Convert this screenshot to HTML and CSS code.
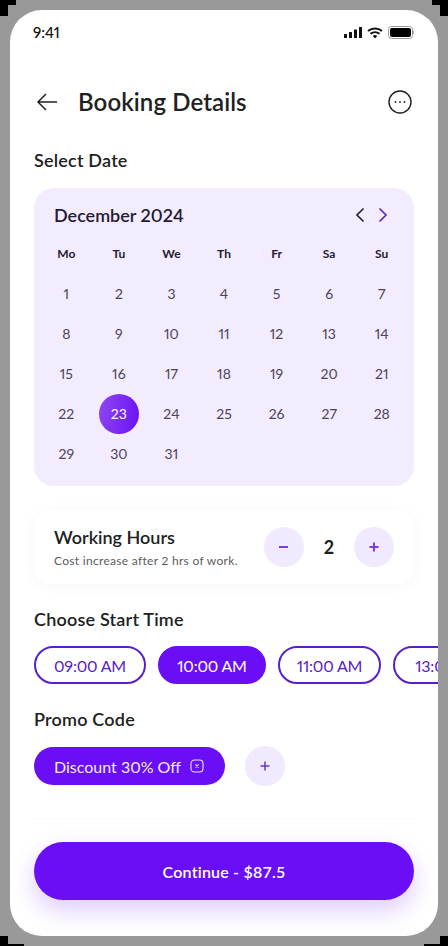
FILE: index.html
```html
<!DOCTYPE html>
<html lang="en">

<head>
  <meta charset="UTF-8" />
  <meta name="viewport" content="width=device-width, initial-scale=1.0" />
  <title>Booking Details</title>
  <link rel="stylesheet" href="styles.css">
</head>

<body>
  <!-- Black notches left in the corners of the mockup -->
  <svg class="corners" width="448" height="946" viewBox="0 0 448 946">
    <path fill="#000" d="M0 0h16v5H8v11H0zM448 0h-16v5h8v11h8zM0 946v-10h8v8h16v2zM448 946v-10h-8v8h-16v2z" />
  </svg>

  <div class="screen">
    <div class="status-bar">
      <span class="status-time">9:41</span>
      <svg class="status-icons" width="70" height="14" viewBox="0 0 70 14">
        <g fill="#111">
          <rect x="0" y="8" width="3" height="4" rx=".5" />
          <rect x="5" y="6" width="3" height="6" rx=".5" />
          <rect x="10" y="3.500" width="3" height="8.500" rx=".5" />
          <rect x="15" y="1" width="3" height="11" rx=".5" />
        </g>
        <path d="M24 5a11 11 0 0 1 14 0M26.500 7.800a7 7 0 0 1 9 0" fill="none" stroke="#111" stroke-width="2" />
        <path d="M28.800 10a3.500 3.500 0 0 1 4.400 0L31 12.500z" fill="#111" />
        <rect x="44.500" y=".5" width="24" height="12" rx="3" fill="none" stroke="#999" />
        <rect x="46" y="2" width="21" height="9" rx="2" fill="#000" />
        <rect x="69" y="5" width="1" height="3" fill="#aaa" />
      </svg>
    </div>

    <header class="page-header">
      <svg class="back-icon" width="24" height="24" viewBox="0 0 24 24">
        <path d="M23 12H4M12 4l-8 8 8 8" fill="none" stroke="#212121" stroke-width="1.500" />
      </svg>
      <h1>Booking Details</h1>
      <svg class="more-icon" width="24" height="24" viewBox="0 0 24 24">
        <circle cx="12" cy="12" r="11" fill="none" stroke="#212121" stroke-width="1.400" />
        <g fill="#212121">
          <circle cx="7.500" cy="12" r=".9" />
          <circle cx="12" cy="12" r=".9" />
          <circle cx="16.500" cy="12" r=".9" />
        </g>
      </svg>
    </header>

    <h2 class="section-title date-title">Select Date</h2>
    <section class="calendar">
      <div class="calendar-head">
        <span class="month">December 2024</span>
        <div class="month-nav">
          <svg width="12" height="16" viewBox="0 0 12 16">
            <path d="M9.500 1.500L3 8l6.500 6.500" fill="none" stroke="#2a2140" stroke-width="1.700" />
          </svg>
          <svg width="12" height="16" viewBox="0 0 12 16">
            <path d="M2.500 1.500L9 8l-6.500 6.500" fill="none" stroke="#5a28c8" stroke-width="1.700" />
          </svg>
        </div>
      </div>
      <div class="weekdays">
        <span>Mo</span><span>Tu</span><span>We</span><span>Th</span><span>Fr</span><span>Sa</span><span>Su</span>
      </div>
      <div class="days">
        <span>1</span><span>2</span><span>3</span><span>4</span><span>5</span><span>6</span><span>7</span>
        <span>8</span><span>9</span><span>10</span><span>11</span><span>12</span><span>13</span><span>14</span>
        <span>15</span><span>16</span><span>17</span><span>18</span><span>19</span><span>20</span><span>21</span>
        <span>22</span><span class="selected">23</span><span>24</span><span>25</span><span>26</span><span>27</span><span>28</span>
        <span>29</span><span>30</span><span>31</span>
      </div>
    </section>

    <section class="hours-card">
      <div class="hours-text">
        <div class="hours-title">Working Hours</div>
        <div class="hours-note">Cost increase after 2 hrs of work.</div>
      </div>
      <div class="stepper">
        <span class="round-btn">
          <svg width="12" height="12" viewBox="0 0 12 12"><path d="M1 6h9" stroke="#7b3fe0" stroke-width="2" /></svg>
        </span>
        <span class="count">2</span>
        <span class="round-btn">
          <svg width="12" height="12" viewBox="0 0 12 12"><path d="M1.500 6h9M6 1.500v9" stroke="#7b3fe0" stroke-width="2" /></svg>
        </span>
      </div>
    </section>

    <h2 class="section-title time-title">Choose Start Time</h2>
    <div class="time-row">
      <span class="time-pill">09:00 AM</span>
      <span class="time-pill active">10:00 AM</span>
      <span class="time-pill">11:00 AM</span>
      <span class="time-pill">13:00 PM</span>
    </div>

    <h2 class="section-title promo-title">Promo Code</h2>
    <div class="promo-row">
      <span class="promo-chip">
        Discount 30% Off
        <svg width="14" height="14" viewBox="0 0 14 14">
          <rect x="1" y="1" width="12" height="12" rx="3.500" fill="none" stroke="#efe4ff" stroke-width="1.100" />
          <path d="M5.400 5.400l3.200 3.200M8.600 5.400l-3.200 3.200" stroke="#efe4ff" stroke-width="1.100" />
        </svg>
      </span>
      <span class="round-btn">
        <svg width="12" height="12" viewBox="0 0 12 12"><path d="M1.500 6h9M6 1.500v9" stroke="#6a35c0" stroke-width="1.500" /></svg>
      </span>
    </div>

    <footer class="page-footer">
      <button class="continue-btn" type="button">Continue - $87.5</button>
    </footer>
  </div>
</body>

</html>
```

FILE: styles.css
```css
* {
  box-sizing: border-box;
}

body {
  margin: 0;
  width: 448px;
  height: 946px;
  padding: 10px;
  background-color: #999999;
  font-family: "Lato", "Open Sans", sans-serif;
  font-variant-numeric: proportional-nums;
  color: #212121;
  overflow: hidden;
  position: relative;
}

.corners {
  position: absolute;
  left: 0;
  top: 0;
}

.screen {
  width: 428px;
  height: 926px;
  background-color: #fff;
  border-radius: 32px;
  padding: 0 24px;
  overflow: hidden;
}

/* Status bar */
.status-bar {
  height: 44px;
  padding-top: 12px;
  display: flex;
  justify-content: space-between;
  align-items: flex-start;
  margin-left: -1px;
}

.status-time {
  font-size: 15px;
  font-weight: 500;
  line-height: 20px;
  color: #111;
}

.status-icons {
  margin-top: 4px;
}

/* Header */
.page-header {
  margin-top: 31px;
  height: 32px;
  display: flex;
  align-items: center;
}

.back-icon {
  margin-top: 2px;
  margin-right: 20px;
  flex: none;
}

.more-icon {
  margin-top: 2px;
  margin-right: 2px;
}

h1 {
  flex: 1;
  margin: 0;
  font-size: 24px;
  font-weight: 600;
  letter-spacing: 0.1px;
}

.section-title {
  margin: 0;
  font-size: 18px;
  font-weight: 600;
  line-height: 24px;
  letter-spacing: 0.2px;
}

.date-title {
  margin-top: 31px;
}

/* Calendar */
.calendar {
  margin-top: 16px;
  height: 298px;
  padding: 15px 6px 0;
  background-color: #f3ecfe;
  border-radius: 20px;
}

.calendar-head {
  display: flex;
  justify-content: space-between;
  align-items: center;
  height: 24px;
  padding: 0 19px 0 14px;
}

.month {
  font-size: 18px;
  font-weight: 600;
  color: #231a33;
}

.month-nav {
  display: flex;
  gap: 11px;
}

.weekdays,
.days {
  display: grid;
  grid-template-columns: repeat(7, 1fr);
  text-align: center;
}

.weekdays {
  margin-top: 17px;
  font-size: 12px;
  font-weight: 700;
  line-height: 20px;
  color: #231a33;
}

.days {
  margin-top: 10px;
  grid-auto-rows: 40px;
  font-size: 14px;
  color: #4a4358;
}

.days span {
  padding-bottom: 2px;
  display: flex;
  align-items: center;
  justify-content: center;
}

.days .selected {
  width: 40px;
  height: 40px;
  justify-self: center;
  border-radius: 50%;
  color: #fff;
  background: linear-gradient(100deg, #8f48f0, #6a10f5);
}

/* Working hours */
.hours-card {
  margin-top: 24px;
  height: 74px;
  padding: 0 20px;
  display: flex;
  justify-content: space-between;
  align-items: center;
  border-radius: 16px;
  background-color: #fff;
  box-shadow: 0 2px 16px rgba(60, 30, 120, 0.04);
}

.hours-title {
  font-size: 18px;
  font-weight: 600;
  line-height: 24px;
}

.hours-note {
  margin-top: 4px;
  font-size: 12px;
  line-height: 16px;
  letter-spacing: 0.3px;
  color: #5c5c5c;
}

.stepper {
  display: flex;
  align-items: center;
}

.count {
  width: 50px;
  text-align: center;
  font-size: 18px;
  font-weight: 700;
}

.round-btn {
  width: 40px;
  height: 40px;
  border-radius: 50%;
  background-color: #f1e9fd;
  display: flex;
  align-items: center;
  justify-content: center;
  flex: none;
}

.time-title {
  margin-top: 23px;
}

/* Time pills run off the right edge of the screen */
.time-row {
  margin-top: 15px;
  margin-right: -24px;
  display: flex;
  gap: 12px;
  overflow: hidden;
}

.time-pill {
  flex: none;
  width: 112px;
  height: 38px;
  display: flex;
  align-items: center;
  justify-content: center;
  border: 2px solid #5a20c8;
  border-radius: 19px;
  font-size: 16px;
  letter-spacing: -0.2px;
  white-space: nowrap;
  color: #5a20c8;
}

.time-pill:nth-child(2) {
  width: 108px;
}

.time-pill:nth-child(3) {
  width: 103px;
}

.time-pill.active {
  background-color: #6a0ff5;
  border-color: #6a0ff5;
  color: #fff;
}

.promo-title {
  margin-top: 23px;
}

/* Promo */
.promo-row {
  margin-top: 15px;
  display: flex;
  align-items: center;
  gap: 20px;
}

.promo-chip {
  height: 38px;
  padding: 0 21px 0 20px;
  display: flex;
  align-items: center;
  gap: 9px;
  border-radius: 19px;
  background-color: #6a0ff5;
  font-size: 16px;
  color: #f3ebff;
}

/* Footer */
.page-footer {
  margin-top: 32px;
  padding-top: 23px;
  border-top: 1px solid #fafafa;
}

.continue-btn {
  display: block;
  width: 100%;
  height: 58px;
  border: none;
  border-radius: 29px;
  background-color: #6a0ff5;
  font-family: inherit;
  font-size: 16px;
  font-weight: 600;
  letter-spacing: 0.2px;
  color: #fff;
  box-shadow: 0 10px 24px rgba(106, 15, 245, 0.22);
}
```
